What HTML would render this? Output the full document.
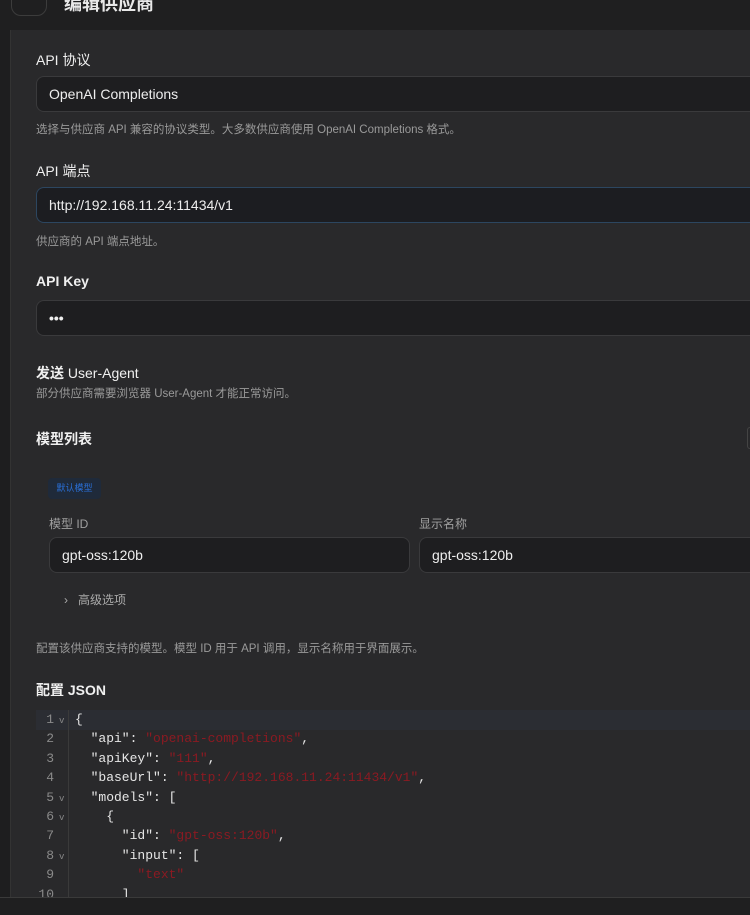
<!DOCTYPE html>
<html><head><meta charset="utf-8"><style>
*{margin:0;padding:0;box-sizing:border-box}
html,body{width:750px;height:915px;overflow:hidden}
body{background:#29292b;font-family:"Liberation Sans","Noto Sans CJK SC",sans-serif;color:#e8e8e8;position:relative}
.a{position:absolute;white-space:nowrap}
.lbl{font-size:14px;font-weight:bold;color:#f0f0f0}
.hint{font-size:11.5px;color:#9a9a9a}
.inp{position:absolute;height:36px;background:#1e1e20;border:1px solid #3a3a3c;border-radius:8px;font-size:14px;color:#eee;padding-left:12px;line-height:34px;overflow:hidden}
.code{font-family:"Liberation Mono",monospace;font-size:13px;line-height:19.4px}
.s{color:#8b1a22}
.ln{color:#8a8a8a;text-align:right;width:20px}
</style></head><body>
<div class="a" style="left:0;top:0;width:750px;height:30px;background:#1f1f20"></div>
<div class="a" style="left:11px;top:-20px;width:36px;height:36px;border:1px solid #3c3c3c;border-radius:10px"></div>
<div class="a" style="left:64px;top:-10px;font-size:18px;font-weight:bold">编辑供应商</div>
<div class="a" style="left:0;top:30px;width:11px;height:870px;background:#1e1e1f;border-right:1px solid #333"></div>

<div class="a lbl" style="left:36px;top:50px;font-weight:normal">API 协议</div>
<div class="inp" style="left:36px;top:76px;width:714px;border-right:none;border-radius:8px 0 0 8px">OpenAI Completions</div>
<div class="a hint" style="left:36px;top:121px">选择与供应商 API 兼容的协议类型。大多数供应商使用 OpenAI Completions 格式。</div>

<div class="a lbl" style="left:36px;top:161px;font-weight:normal">API 端点</div>
<div class="inp" style="left:36px;top:187px;width:714px;border-color:#2c4660;background:#1c1d21;border-right:none;border-radius:8px 0 0 8px">http://192.168.11.24:11434/v1</div>
<div class="a hint" style="left:36px;top:233px">供应商的 API 端点地址。</div>

<div class="a lbl" style="left:36px;top:273px">API Key</div>
<div class="inp" style="left:36px;top:300px;width:714px;font-weight:bold;border-right:none;border-radius:8px 0 0 8px">•••</div>

<div class="a" style="left:36px;top:363px;font-size:14px;color:#f0f0f0"><b>发送</b> User-Agent</div>
<div class="a hint" style="left:36px;top:385px">部分供应商需要浏览器 User-Agent 才能正常访问。</div>

<div class="a lbl" style="left:36px;top:429px">模型列表</div>
<div class="a" style="left:747px;top:427px;width:3px;height:22px;border:1px solid #444;border-right:none;border-radius:5px 0 0 5px"></div>

<div class="a" style="left:48px;top:478px;width:53px;height:21px;background:#1f2a3a;border-radius:4px;font-size:9px;color:#2a6fd6;line-height:21px;text-align:center">默认模型</div>
<div class="a" style="left:49px;top:515px;font-size:12px;color:#a0a0a0">模型 ID</div>
<div class="a" style="left:419px;top:515px;font-size:12px;color:#a0a0a0">显示名称</div>
<div class="inp" style="left:49px;top:537px;width:361px">gpt-oss:120b</div>
<div class="inp" style="left:419px;top:537px;width:331px;border-right:none;border-radius:8px 0 0 8px">gpt-oss:120b</div>
<div class="a" style="left:64px;top:591px;font-size:12px;color:#aaa">›&nbsp;&nbsp;&nbsp;高级选项</div>

<div class="a hint" style="left:36px;top:640px">配置该供应商支持的模型。模型 ID 用于 API 调用，显示名称用于界面展示。</div>
<div class="a lbl" style="left:36px;top:680px">配置 JSON</div>

<div class="a" style="left:36px;top:710px;width:714px;height:20px;background:#2b2d33"></div>
<div class="a" style="left:68px;top:710px;width:1px;height:190px;background:#3a3a3a"></div>
<div class="a code ln" style="left:34px;top:710px;white-space:normal">1<br>2<br>3<br>4<br>5<br>6<br>7<br>8<br>9<br>10</div>
<div class="a code" style="left:59px;top:712px;font-size:9px;color:#888;line-height:19.4px;white-space:normal">v<br>&nbsp;<br>&nbsp;<br>&nbsp;<br>v<br>v<br>&nbsp;<br>v</div>
<pre class="a code" style="left:75px;top:710px;color:#e6e6e6;white-space:pre">{
  "api": <span class="s">"openai-completions"</span>,
  "apiKey": <span class="s">"111"</span>,
  "baseUrl": <span class="s">"http://192.168.11.24:11434/v1"</span>,
  "models": [
    {
      "id": <span class="s">"gpt-oss:120b"</span>,
      "input": [
        <span class="s">"text"</span>
      ]</pre>
<div class="a" style="left:0;top:897px;width:750px;height:18px;background:#1f1f20;border-top:1px solid #3a3a3a"></div>
</body></html>
